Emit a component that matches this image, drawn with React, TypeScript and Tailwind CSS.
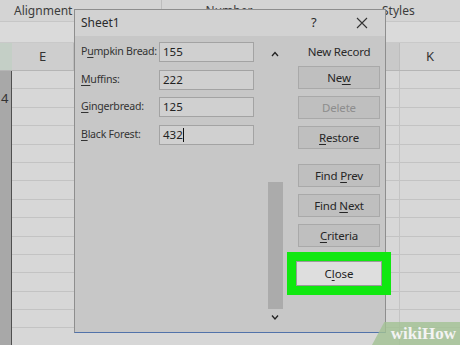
import React from 'react';

const font = { fontFamily: '"Noto Sans", "Open Sans", sans-serif' };

const rowLines = Array.from({ length: 15 });

const Btn: React.FC<{ pre?: string; u: string; post?: string; disabled?: boolean }> = ({ pre = '', u, post = '', disabled }) => (
  <div
    className={`h-[23px] w-[82px] flex items-center justify-center border border-[#a9a9a9] bg-[#bfbfbf] text-[11.5px] tracking-[-0.2px] ${
      disabled ? 'text-[#8d8d8d]' : 'text-[#262626]'
    }`}
  >
    <span className="whitespace-nowrap">
      {pre}
      <span className={disabled ? '' : 'underline underline-offset-2'}>{u}</span>
      {post}
    </span>
  </div>
);

const Field: React.FC<{ pre?: string; u: string; post: string; value: string; caret?: boolean }> = ({ pre = '', u, post, value, caret }) => (
  <div className="flex items-center h-[20px]">
    <div className="w-[78px] whitespace-nowrap text-[10.6px] tracking-[-0.25px] text-[#333]">
      {pre}
      <span className="underline underline-offset-2">{u}</span>
      {post}
    </div>
    <div className="w-[95px] h-[20px] border border-[#a3a3a3] bg-[#d0d0d0] flex items-center pl-[3px] text-[11.5px] text-[#222]">
      {value}
      {caret && <span className="inline-block w-px h-[14px] bg-[#111]" />}
    </div>
  </div>
);

export default function App() {
  return (
    <div className="relative w-[460px] h-[345px] overflow-hidden bg-[#d7d7d7]" style={font}>
      {/* ribbon group labels */}
      <div className="h-[22px] flex items-center bg-[#d4d4d4] border-b border-[#c6c6c6] text-[12px] text-[#3c3c3c]">
        <div className="w-[162px] pl-[14px] border-r border-[#bdbdbd] h-full flex items-center">Alignment</div>
        <div className="w-[134px] flex justify-center">Number</div>
        <div className="flex-1 pl-[86px]">Styles</div>
      </div>
      <div className="h-[21px] bg-[#dadada] border-b border-[#c9c9c9]" />
      {/* column headers */}
      <div className="h-[28px] flex bg-[#cecece] border-b border-[#b5b5b5] text-[13px] text-[#333]">
        <div className="w-[12px] bg-[#c4cfc6]" />
        <div className="w-[62px] flex items-center justify-center border-r border-[#bdbdbd]">E</div>
        <div className="w-[326px] bg-[#c9c9c9] border-r border-[#bdbdbd]" />
        <div className="flex-1 flex items-center justify-center bg-[#d3d3d3]">K</div>
      </div>
      {/* grid */}
      <div className="flex">
        <div className="w-[12px] bg-[#a8a8a8] border-r border-[#4f4f4f] h-[280px] text-[13px] text-[#333] pt-[19px]">
          <div className="h-[18px] flex items-center pl-[1px]">4</div>
        </div>
        <div className="w-[388px] border-r border-[#c4c4c4]">
          {rowLines.map((_, i) => (
            <div key={i} className="h-[18.4px] border-b border-[#c3c3c3]" />
          ))}
        </div>
        <div className="flex-1">
          {rowLines.map((_, i) => (
            <div key={i} className="h-[18.4px] border-b border-[#c3c3c3]" />
          ))}
        </div>
      </div>

      {/* dialog */}
      <div className="absolute left-[74px] top-[9px] w-[312px] h-[324px] bg-[#c7c7c7] border border-[#8e8e8e] border-b-[#5273aa] flex flex-col">
        <div className="h-[26px] shrink-0 bg-[#d2d2d2] flex items-center pl-[6px] text-[12px] text-[#2a2a2a]">
          <span className="flex-1">Sheet1</span>
          <span className="w-[10px] text-[13px] mr-[35px]">?</span>
          <svg width="12" height="12" viewBox="0 0 12 12" className="mr-[17px]">
            <path d="M1 1 L11 11 M11 1 L1 11" stroke="#333" strokeWidth="1.1" />
          </svg>
        </div>
        <div className="flex flex-1">
          {/* fields */}
          <div className="w-[188px] pl-[6px] pt-[6px] flex flex-col gap-[7.5px]">
            <Field pre="P" u="u" post="mpkin Bread:" value="155" />
            <Field u="M" post="uffins:" value="222" />
            <Field u="G" post="ingerbread:" value="125" />
            <Field u="B" post="lack Forest:" value="432" caret />
          </div>
          {/* scrollbar */}
          <div className="w-[24px] flex flex-col items-center pt-[15px]">
            <svg width="8" height="6" viewBox="0 0 8 6">
              <path d="M1 5 L4 1.5 L7 5" stroke="#222" strokeWidth="1.3" fill="none" />
            </svg>
            <div className="mt-[125px] w-[15px] h-[127px] bg-[#ababab]" />
            <svg width="8" height="6" viewBox="0 0 8 6" className="mt-[5px]">
              <path d="M1 1.5 L4 5 L7 1.5" stroke="#222" strokeWidth="1.3" fill="none" />
            </svg>
          </div>
          {/* buttons */}
          <div className="flex-1 pl-[11px] pt-[7px] flex flex-col">
            <div className="h-[18px] w-[82px] flex items-center justify-center text-[11.5px] tracking-[-0.2px] text-[#2a2a2a]">New Record</div>
            <div className="mt-[5px] flex flex-col gap-[7px]">
              <Btn pre="Ne" u="w" />
              <Btn u="Delete" disabled />
              <Btn u="R" post="estore" />
            </div>
            <div className="mt-[15px] flex flex-col gap-[7px]">
              <Btn pre="Find " u="P" post="rev" />
              <Btn pre="Find " u="N" post="ext" />
              <Btn u="C" post="riteria" />
            </div>
            <div className="mt-[14px] -ml-[2px] w-[86px] h-[25px] border border-[#9a9a9a] bg-[#dedede] outline-[9px] outline-solid outline-[#10e810] flex items-center justify-center text-[11.5px] text-[#222]">
              <span>
                C<span className="underline underline-offset-2">l</span>ose
              </span>
            </div>
          </div>
        </div>
      </div>

      {/* watermark */}
      <div className="absolute right-0 bottom-0 w-[88px] h-[23px] bg-[#a3c293]/80 [clip-path:polygon(14%_0,100%_0,100%_100%,0_100%)] flex items-center justify-end pr-[4px]">
        <span className="text-[17px] font-bold text-[#f3f3f3]" style={{ fontFamily: '"Liberation Serif", serif' }}>
          wikiHow
        </span>
      </div>
    </div>
  );
}
